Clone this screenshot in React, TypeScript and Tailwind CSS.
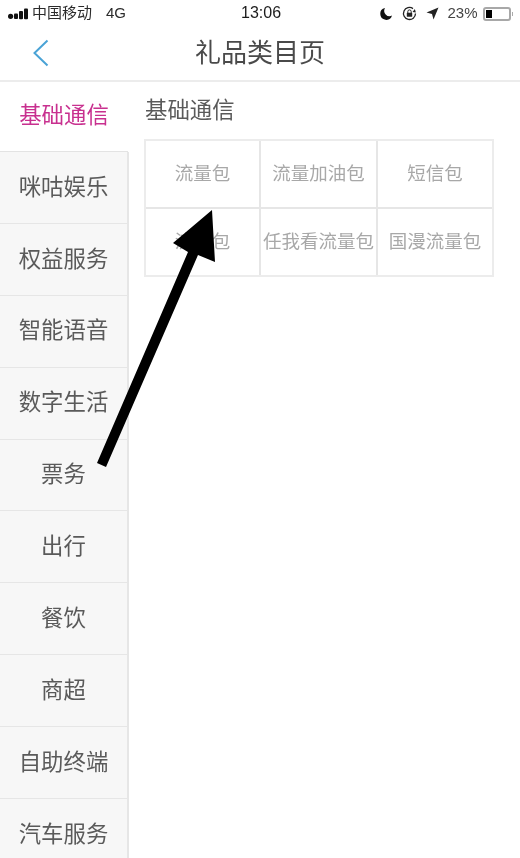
const font = "font-['Liberation_Sans','Noto_Sans_CJK_SC',sans-serif]";
const cats = ["咪咕娱乐", "权益服务", "智能语音", "数字生活", "票务", "出行", "餐饮", "商超", "自助终端", "汽车服务"];
const row1 = ["流量包", "流量加油包", "短信包"];
const row2 = ["流量包", "任我看流量包", "国漫流量包"];

function Cell({ t, right, bottom }: { t: string; right?: boolean; bottom?: boolean }) {
  return (
    <div className={`flex items-center justify-center whitespace-nowrap text-[18.5px] text-[#a8a8a8] border-[#e6e6e6] ${right ? "border-r-2" : ""} ${bottom ? "border-b-2" : ""}`}>
      {t}
    </div>
  );
}

export default function App() {
  return (
    <div className={`${font} relative w-[520px] h-[858px] overflow-hidden bg-white blur-[0.4px]`}>
      <div className="h-[27px] flex items-center justify-between pl-[8px] pr-[7px] text-[15px] text-[#2b2b2b]">
        <div className="flex items-center">
          <svg width="21" height="12" viewBox="0 0 21 12" className="mr-[3px]">
            <circle cx="2.6" cy="8.3" r="2.6" fill="#111" />
            <rect x="6" y="5.5" width="4" height="5.6" rx="1" fill="#111" />
            <rect x="11" y="3" width="4" height="8.2" rx="1" fill="#111" />
            <rect x="16" y="0.5" width="4" height="10.7" rx="1" fill="#111" />
          </svg>
          <span>中国移动</span>
          <span className="ml-[14px]">4G</span>
        </div>
        <span className="absolute left-[241px] top-[1px] text-[16px] font-medium text-[#1c1c1c]">13:06</span>
        <div className="flex items-center">
          <svg width="14" height="14" viewBox="0 0 14 14" className="mr-[9px]">
            <path d="M6 1a6 6 0 1 0 7 7.6A5.4 5.4 0 0 1 6 1z" fill="#111" />
          </svg>
          <svg width="15" height="15" viewBox="0 0 15 15" className="mr-[9px]">
            <path d="M13.5 7.5A6 6 0 1 1 11 2.6" fill="none" stroke="#222" strokeWidth="1.3" />
            <path d="M13.8 6.5 10.5 6l2.4-3z" fill="#222" />
            <rect x="4.8" y="6.8" width="5.4" height="4" rx="0.6" fill="#222" />
            <path d="M5.8 7V5.6a1.7 1.7 0 0 1 3.4 0V7" fill="none" stroke="#222" strokeWidth="1" />
          </svg>
          <svg width="13" height="13" viewBox="0 0 13 13" className="mr-[8px]">
            <path d="M12.5.5 7.5 12.5 6 7 .5 5.5z" fill="#222" />
          </svg>
          <span className="mr-[5px] text-[#444]">23%</span>
          <div className="w-[28px] h-[14px] rounded-[3px] border-2 border-[#a8a8a8] px-[1px] py-[1px] mr-[1px]">
            <div className="w-[6px] h-full bg-black" />
          </div>
          <div className="w-[1.5px] h-[4px] bg-[#aaa]" />
        </div>
      </div>

      <div className="relative h-[55px] flex items-center justify-center pb-[1px] border-b-2 border-[#ececec]">
        <svg width="18" height="28" viewBox="0 0 18 28" className="absolute left-[32px] top-[12px]">
          <path d="M15.5 1.5 2.5 14l13 12.5" fill="none" stroke="#4aa3d6" strokeWidth="2" />
        </svg>
        <span className="text-[26px] text-[#4a4a4a] leading-none">礼品类目页</span>
      </div>

      <div className="flex">
        <div className="w-[129px] shrink-0">
          <div className="h-[70px] w-[128px] flex items-center justify-center pb-[2px] text-[22.4px] text-[#c8308f] bg-white border-b border-[#e3e3e3]">
            基础通信
          </div>
          {cats.map((c) => (
            <div key={c} className="h-[71.9px] flex items-center justify-center text-[22.4px] text-[#5a5a5a] bg-[#f7f7f7] border-b border-r-2 border-[#e6e6e6]">
              {c}
            </div>
          ))}
        </div>
        <div className="pl-[15px] flex-1">
          <div className="h-[57px] flex items-center pl-[1px] text-[22.4px] text-[#5a5a5a]">基础通信</div>
          <div className="w-[350px] h-[138px] grid grid-cols-[115px_117px_1fr] grid-rows-[68px_1fr] border-2 border-[#ececec]">
            <Cell t={row1[0]} right bottom />
            <Cell t={row1[1]} right bottom />
            <Cell t={row1[2]} bottom />
            <Cell t={row2[0]} right />
            <Cell t={row2[1]} right />
            <Cell t={row2[2]} />
          </div>
        </div>
      </div>

      <svg width="520" height="858" viewBox="0 0 520 858" className="absolute inset-0 pointer-events-none">
        <polygon points="97,463 188,252 173,243 212,210 215,262 198,255 106,467" fill="#000" />
      </svg>
    </div>
  );
}
